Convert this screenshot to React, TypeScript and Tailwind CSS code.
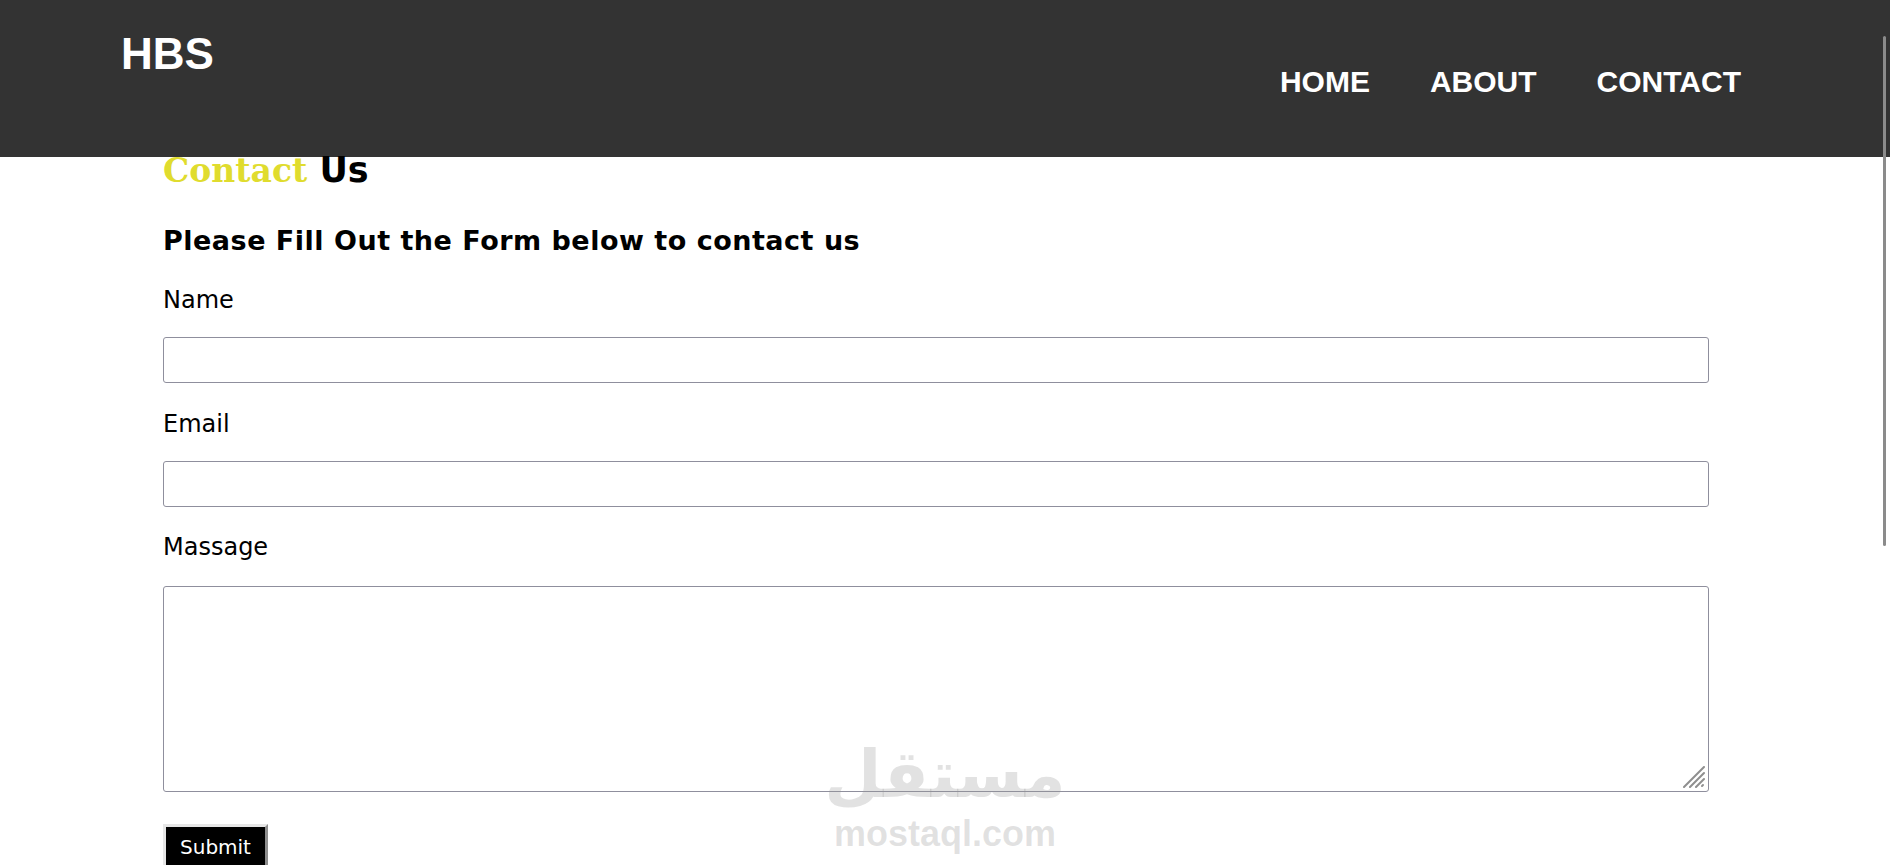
export default function App() {
  return (
    <div className="relative h-[865px] overflow-hidden bg-white font-['DejaVu_Sans',Verdana,sans-serif] text-black">
      <header className="flex h-[157px] items-start justify-between bg-[#333333] pl-[121px] pr-[149px] font-['Liberation_Sans',Arial,sans-serif] font-bold text-white">
        <h1 className="mt-[32px] text-[44px] leading-none">HBS</h1>
        <nav className="mt-[67px] flex gap-[60px] text-[30px] leading-none">
          <a href="#">HOME</a>
          <a href="#">ABOUT</a>
          <a href="#">CONTACT</a>
        </nav>
      </header>

      <main className="ml-[163px] flex w-[1546px] flex-col">
        <h1 className="-mt-[4px] text-[35px] font-bold leading-none">
          <span className="font-['DejaVu_Serif',Georgia,serif] text-[33px] text-[#e0dc2e]">Contact</span> Us
        </h1>
        <h2 className="mt-[39px] text-[27px] font-bold leading-none tracking-[0.5px]">
          Please Fill Out the Form below to contact us
        </h2>

        <form className="flex flex-col">
          <label className="mt-[34px] text-[24px] leading-none">Name</label>
          <input type="text" className="mt-[25px] h-[46px] rounded-[3px] border border-[#8f8f9d] px-2 outline-none" />

          <label className="mt-[29px] text-[24px] leading-none">Email</label>
          <input type="email" className="mt-[25px] h-[46px] rounded-[3px] border border-[#8f8f9d] px-2 outline-none" />

          <label className="mt-[28px] text-[24px] leading-none">Massage</label>
          <div className="relative mt-[27px]">
            <textarea className="block h-[206px] w-full resize-none rounded-[3px] border border-[#8f8f9d] outline-none" />
            <svg className="absolute bottom-[4px] right-[4px] h-[22px] w-[22px]" viewBox="0 0 22 22">
              <g stroke="#8f8f8f" strokeWidth="2" strokeLinecap="round">
                <line x1="1" y1="21" x2="21" y2="1" />
                <line x1="7" y1="21" x2="21" y2="7" />
                <line x1="13" y1="21" x2="21" y2="13" />
                <line x1="19" y1="20" x2="20" y2="19" />
              </g>
            </svg>
          </div>

          <button
            type="submit"
            className="mt-[32px] h-[48px] w-[105px] border-[3px] border-t-[#e6e6e6] border-l-[#e6e6e6] border-r-[#8d8d8d] border-b-[#8d8d8d] bg-black pt-[2px] text-[20px] text-white"
          >
            <span className="relative -top-[2px]">Submit</span>
          </button>
        </form>
      </main>

      {/* watermark */}
      <div className="pointer-events-none absolute left-[832px] top-[744px] flex w-[226px] flex-col items-center text-[rgba(150,150,150,0.28)]">
        <span className="font-['DejaVu_Sans',sans-serif] text-[66px] font-bold leading-[62px]">مستقل</span>
        <span className="mt-[10px] font-['Liberation_Sans',Arial,sans-serif] text-[36px] font-bold leading-none">mostaql.com</span>
      </div>

      <div className="absolute right-[4px] top-[36px] h-[510px] w-[3px] rounded-full bg-[#8b8b8b]" />
    </div>
  );
}
